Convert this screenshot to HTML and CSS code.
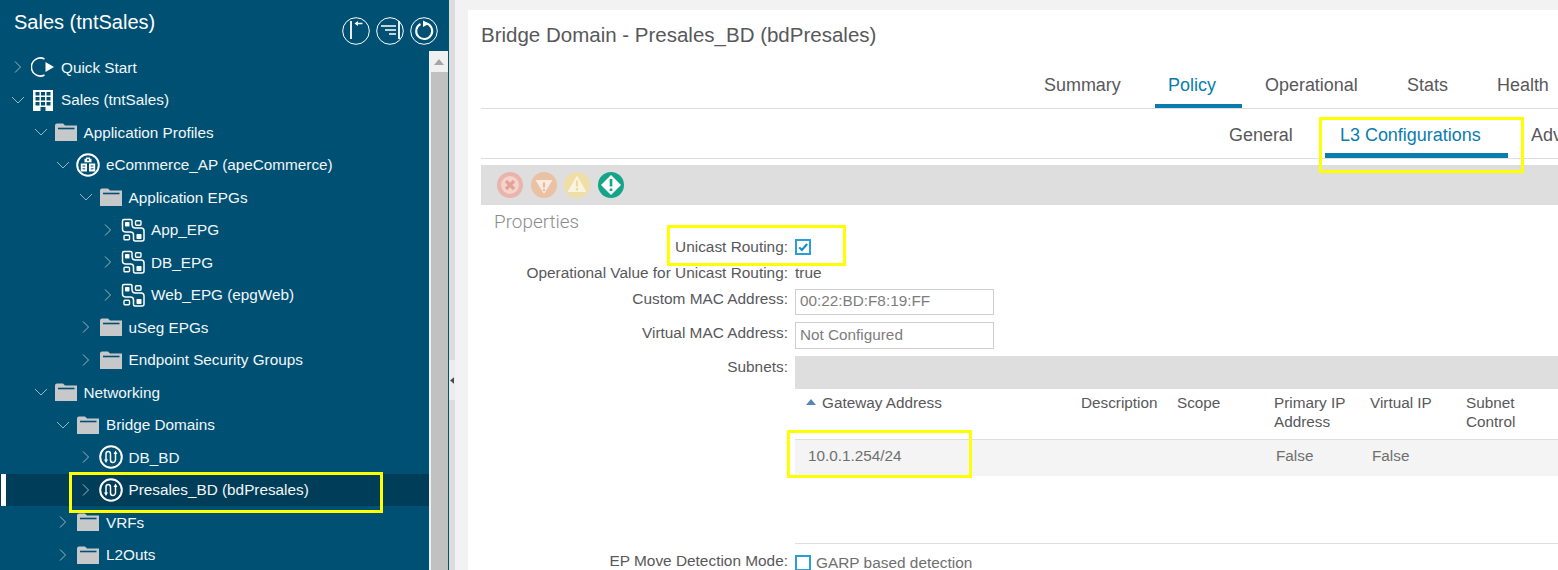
FILE: index.html
```html
<!DOCTYPE html>
<html lang="en">
<head>
<meta charset="utf-8">
<title>Bridge Domain - Presales_BD</title>
<link rel="stylesheet" href="styles.css">
</head>
<body>
<svg class="defs" width="0" height="0" aria-hidden="true">
  <defs>
    <symbol id="chev-r" viewBox="0 0 16 16"><path d="M5 2.500 10.500 8 5 13.500" fill="none" stroke="#9fb4be" stroke-width="1"/></symbol>
    <symbol id="chev-d" viewBox="0 0 16 16"><path d="M2 5 8 11 14 5" fill="none" stroke="#9fb4be" stroke-width="1"/></symbol>
    <symbol id="i-folder" viewBox="0 0 24 20"><path d="M1 3.500Q1 1.500 3 1.500H9L11 3.500H23V19H1Z" fill="#c6c8ca"/><path d="M4 6.500H20.500" stroke="#005073" stroke-width="1.600"/></symbol>
    <symbol id="i-play" viewBox="0 0 24 24"><path d="M13.500 4A9 9 0 1 0 13.500 20" fill="none" stroke="#fff" stroke-width="1.600"/><path d="M14.500 7 23 12 14.500 17Z" fill="#fff"/></symbol>
    <symbol id="i-tenant" viewBox="0 0 24 22"><path fill="#fff" fill-rule="evenodd" d="M2 1H22V22H14.500V18H9.500V22H2ZM4.500 3V6.500H8.500V3ZM10 3V6.500H14V3ZM15.500 3V6.500H19.500V3ZM4.500 8V11.500H8.500V8ZM10 8V11.500H14V8ZM15.500 8V11.500H19.500V8ZM4.500 13V16.500H8.500V13ZM10 13V16.500H14V13ZM15.500 13V16.500H19.500V13Z"/></symbol>
    <symbol id="i-ap" viewBox="0 0 24 24"><circle cx="12" cy="12" r="10.800" fill="none" stroke="#fff" stroke-width="2"/><path fill="#fff" d="M10 4.500h4v1.200h1.500v3.500H8.500V5.700H10ZM4.800 10.500h6.200v8H4.800ZM13 10.500h6.200v8H13Z"/><path stroke="#005073" stroke-width="1" d="M6.500 13h2.800M6.500 15.800h2.800M14.700 13h2.800M14.700 15.800h2.800"/><circle cx="12" cy="7" r="1" fill="#005073"/></symbol>
    <symbol id="i-epg" viewBox="0 0 24 24"><path fill="none" stroke="#fff" stroke-width="1.500" d="M1.500 3Q1.500 1.500 3 1.500H9.500Q11 1.500 11 3V6.500Q11 10 14.500 10H20Q23 10 23 13V21Q23 23 21 23H14Q12.500 23 12.500 21V17Q12.500 14 9.500 14H5Q1.500 14 1.500 11Z"/><rect x="4" y="4" width="4.500" height="4.500" rx="0.800" fill="#fff"/><rect x="15.500" y="16" width="5" height="5" rx="0.800" fill="#fff"/><rect x="14.500" y="2.800" width="5.500" height="4.400" rx="1" fill="none" stroke="#fff" stroke-width="1.400"/><rect x="3" y="17.300" width="5.500" height="4.400" rx="1" fill="none" stroke="#fff" stroke-width="1.400"/></symbol>
    <symbol id="i-bd" viewBox="0 0 24 24"><circle cx="12" cy="12" r="10.800" fill="none" stroke="#fff" stroke-width="2"/><path d="M7 16V9Q7 6.500 9.200 6.500T11.500 9V15Q11.500 17.500 13.800 17.500T16.500 15V8" fill="none" stroke="#fff" stroke-width="1.500"/><path fill="#fff" d="M5 14.500H9L7 18ZM14.500 9H18.500L16.500 5.500Z"/></symbol>
  </defs>
</svg>

<aside class="sidebar">
  <header class="side-head">
    <h1 class="side-title">Sales (tntSales)</h1>
    <div class="side-actions">
      <svg class="round-btn" viewBox="0 0 28 28"><circle cx="14" cy="14" r="13.300" fill="none" stroke="#fff" stroke-width="1"/><path d="M9 4V22" stroke="#fff" stroke-width="1.800"/><path d="M14 6.500H20.500" stroke="#fff" stroke-width="1.500"/><path d="M12.500 6.500 16 4V9Z" fill="#fff"/></svg>
      <svg class="round-btn" viewBox="0 0 28 28"><circle cx="14" cy="14" r="13.300" fill="none" stroke="#fff" stroke-width="1"/><path d="M23 4V22" stroke="#fff" stroke-width="1.800"/><path d="M5 9H20M9 13H20M13 17H20" stroke="#fff" stroke-width="1.500"/></svg>
      <svg class="round-btn" viewBox="0 0 28 28"><circle cx="14" cy="14" r="13.300" fill="none" stroke="#fff" stroke-width="1"/><path d="M10.500 7A8 8 0 1 0 16 6.300" fill="none" stroke="#fff" stroke-width="2"/><path d="M13 3.500 19 6.800 13 10Z" fill="#fff"/></svg>
    </div>
  </header>
  <div class="side-body">
    <nav class="tree">
      <div class="row l0"><svg class="chev"><use href="#chev-r"/></svg><svg class="ico"><use href="#i-play"/></svg><span>Quick Start</span></div>
      <div class="row l0"><svg class="chev"><use href="#chev-d"/></svg><svg class="ico"><use href="#i-tenant"/></svg><span>Sales (tntSales)</span></div>
      <div class="row l1"><svg class="chev"><use href="#chev-d"/></svg><svg class="ico"><use href="#i-folder"/></svg><span>Application Profiles</span></div>
      <div class="row l2"><svg class="chev"><use href="#chev-d"/></svg><svg class="ico"><use href="#i-ap"/></svg><span>eCommerce_AP (apeCommerce)</span></div>
      <div class="row l3"><svg class="chev"><use href="#chev-d"/></svg><svg class="ico"><use href="#i-folder"/></svg><span>Application EPGs</span></div>
      <div class="row l4"><svg class="chev"><use href="#chev-r"/></svg><svg class="ico"><use href="#i-epg"/></svg><span>App_EPG</span></div>
      <div class="row l4"><svg class="chev"><use href="#chev-r"/></svg><svg class="ico"><use href="#i-epg"/></svg><span>DB_EPG</span></div>
      <div class="row l4"><svg class="chev"><use href="#chev-r"/></svg><svg class="ico"><use href="#i-epg"/></svg><span>Web_EPG (epgWeb)</span></div>
      <div class="row l3"><svg class="chev"><use href="#chev-r"/></svg><svg class="ico"><use href="#i-folder"/></svg><span>uSeg EPGs</span></div>
      <div class="row l3"><svg class="chev"><use href="#chev-r"/></svg><svg class="ico"><use href="#i-folder"/></svg><span>Endpoint Security Groups</span></div>
      <div class="row l1"><svg class="chev"><use href="#chev-d"/></svg><svg class="ico"><use href="#i-folder"/></svg><span>Networking</span></div>
      <div class="row l2"><svg class="chev"><use href="#chev-d"/></svg><svg class="ico"><use href="#i-folder"/></svg><span>Bridge Domains</span></div>
      <div class="row l3"><svg class="chev"><use href="#chev-r"/></svg><svg class="ico"><use href="#i-bd"/></svg><span>DB_BD</span></div>
      <div class="row l3 selected"><svg class="chev"><use href="#chev-r"/></svg><svg class="ico"><use href="#i-bd"/></svg><span>Presales_BD (bdPresales)</span><i class="mark mark-tree"></i></div>
      <div class="row l2"><svg class="chev"><use href="#chev-r"/></svg><svg class="ico"><use href="#i-folder"/></svg><span>VRFs</span></div>
      <div class="row l2"><svg class="chev"><use href="#chev-r"/></svg><svg class="ico"><use href="#i-folder"/></svg><span>L2Outs</span></div>
    </nav>
    <div class="scrollbar">
      <div class="scroll-up"><svg class="scroll-arrow" viewBox="0 0 10 6"><path d="M0 6 5 0 10 6Z" fill="#a6a6a6"/></svg></div>
      <div class="scroll-thumb"></div>
    </div>
  </div>
</aside>

<div class="splitter"><div class="split-handle"><svg class="split-arrow" viewBox="0 0 5 8"><path d="M5 0V8L0 4Z" fill="#4a4a4a"/></svg></div></div>

<main class="main-wrap">
  <section class="panel">
    <h2 class="page-title">Bridge Domain - Presales_BD (bdPresales)</h2>
    <div class="tabs">
      <a class="tab t-summary">Summary</a>
      <a class="tab t-policy active">Policy</a>
      <a class="tab t-oper">Operational</a>
      <a class="tab t-stats">Stats</a>
      <a class="tab t-health">Health</a>
    </div>
    <div class="subtabs">
      <a class="subtab s-general">General</a>
      <a class="subtab s-l3 active">L3 Configurations<i class="mark mark-l3"></i></a>
      <a class="subtab s-adv">Adv</a>
    </div>
    <div class="fault-bar">
      <svg class="fault faded" viewBox="0 0 26 26"><circle cx="13" cy="13" r="13" fill="#e9b4ab"/><circle cx="13" cy="13" r="9" fill="#f3d3cc"/><path d="M9 9 17 17M17 9 9 17" stroke="#e5a195" stroke-width="3.200"/></svg>
      <svg class="fault faded" viewBox="0 0 26 26"><circle cx="13" cy="13" r="13" fill="#ebc1a6"/><path d="M4.500 8H21.500L13 22Z" fill="#f8ebe1"/><path d="M13 10.500V15.500M13 17V19" stroke="#ebb997" stroke-width="2.200"/></svg>
      <svg class="fault faded" viewBox="0 0 26 26"><circle cx="13" cy="13" r="13" fill="#efdea6"/><path d="M13 3.500 22.500 20H3.500Z" fill="#f9f4e2"/><path d="M13 8.500V14.500M13 16V18.500" stroke="#eeda9a" stroke-width="2.200"/></svg>
      <svg class="fault" viewBox="0 0 26 26"><circle cx="13" cy="13" r="13" fill="#14a487"/><path d="M13 3 23 13 13 23 3 13Z" fill="#fff"/><path d="M13 7V14.500M13 16.500V19" stroke="#14a487" stroke-width="2.600"/></svg>
    </div>
    <h3 class="section-title">Properties</h3>
    <div class="form">
      <div class="f-row f-unicast">
        <label class="f-label">Unicast Routing:</label>
        <span class="check on"><svg viewBox="0 0 16 16"><path d="M3 8.500 6.500 12 13.500 4" fill="none" stroke="#0d8fc9" stroke-width="2.800"/></svg></span>
        <i class="mark mark-unicast"></i>
      </div>
      <div class="f-row f-oper">
        <label class="f-label">Operational Value for Unicast Routing:</label>
        <span class="f-value">true</span>
      </div>
      <div class="f-row f-input">
        <label class="f-label">Custom MAC Address:</label>
        <div class="input">00:22:BD:F8:19:FF</div>
      </div>
      <div class="f-row f-input f-input2">
        <label class="f-label">Virtual MAC Address:</label>
        <div class="input tall">Not Configured</div>
      </div>
      <div class="f-row f-subnets">
        <label class="f-label">Subnets:</label>
        <div class="subnets">
          <div class="tbl-bar"></div>
          <div class="tbl-row tbl-head">
            <div class="c-gw"><svg class="sort" viewBox="0 0 10 6"><path d="M0 6 5 0 10 6Z" fill="#5b87b8"/></svg>Gateway Address</div>
            <div class="c-desc">Description</div>
            <div class="c-scope">Scope</div>
            <div class="c-prim">Primary IP<br>Address</div>
            <div class="c-virt">Virtual IP</div>
            <div class="c-ctrl">Subnet<br>Control</div>
          </div>
          <div class="tbl-row tbl-data">
            <div class="c-gw">10.0.1.254/24<i class="mark mark-gw"></i></div>
            <div class="c-desc"></div>
            <div class="c-scope"></div>
            <div class="c-prim">False</div>
            <div class="c-virt">False</div>
            <div class="c-ctrl"></div>
          </div>
          <div class="tbl-end"></div>
        </div>
      </div>
      <div class="f-row f-ep">
        <label class="f-label">EP Move Detection Mode:</label>
        <span class="check"></span>
        <span class="check-text">GARP based detection</span>
      </div>
    </div>
  </section>
</main>
</body>
</html>
```

FILE: styles.css
```css
* { box-sizing: border-box; }
html, body { margin: 0; height: 570px; overflow: hidden; }
body {
  width: 1558px;
  display: flex;
  font-family: "Liberation Sans", Arial, sans-serif;
  background: #f2f2f2;
  color: #58585b;
}
.defs { position: absolute; }

/* sidebar */
.sidebar { width: 449px; flex: none; background: #005073; display: flex; flex-direction: column; border-right: 1px solid #005073; }
.side-head { height: 51px; flex: none; display: flex; justify-content: space-between; padding: 0 10px 0 14px; }
.side-title { margin: 10px 0 0; font-size: 20px; line-height: 24px; font-weight: 400; color: #fff; }
.side-actions { display: flex; gap: 6px; padding-top: 17px; }
.round-btn { width: 28px; height: 28px; }
.side-body { flex: 1; display: flex; min-height: 0; }
.tree { width: 429px; flex: none; }
.row {
  position: relative;
  height: 32.5px;
  display: flex;
  align-items: center;
  font-size: 15.3px;
  color: #f2f7fa;
}
.row span { margin-top: 1px; }
.chev { width: 16px; height: 16px; margin-right: 5px; flex: none; }
.ico { width: 24px; height: 24px; margin-right: 6px; flex: none; }
.l0 { padding-left: 10px; }
.l1 { padding-left: 32.5px; }
.l2 { padding-left: 55px; }
.l3 { padding-left: 77.5px; }
.l4 { padding-left: 100px; }
.selected { background: #003d58; }
.selected::before { content: ""; position: absolute; left: 1px; top: 0; bottom: 0; width: 5px; background: #fff; }

.scrollbar { width: 19px; flex: none; background: #f0f0f0; display: flex; flex-direction: column; }
.scroll-up { height: 21px; flex: none; display: flex; justify-content: center; padding-top: 8px; }
.scroll-arrow { width: 10px; height: 6px; }
.scroll-thumb { flex: 1; margin-left: 2px; background: #c1c1c1; }

.splitter { width: 6px; flex: none; background: #dcdcdc; position: relative; }
.split-handle { position: absolute; left: 0; top: 360px; width: 6px; height: 40px; background: #ececec; display: flex; align-items: center; padding-left: 1px; }
.split-arrow { width: 4px; height: 7px; }

/* main */
.main-wrap { flex: 1; min-width: 0; padding: 10px 0 0 13px; overflow: hidden; }
.panel { width: 1090px; height: 560px; background: #fff; padding: 0 0 0 13px; overflow: hidden; }
.page-title { margin: 0; height: 50px; padding-top: 12px; font-size: 20.5px; line-height: 26px; font-weight: 400; color: #58585b; }

.tabs { height: 49px; display: flex; align-items: stretch; border-bottom: 1px solid #dedede; white-space: nowrap; }
.tab { flex: none; font-size: 17.95px; line-height: 20px; padding-top: 15px; color: #58585b; }
.t-summary { margin-left: 563px; width: 111px; }
.t-policy { width: 87px; padding-left: 13px; color: #0a7cae; border-bottom: 4px solid #0a7cae; }
.t-oper { margin-left: 23px; width: 142px; }
.t-stats { width: 90px; }
.t-health { width: 100px; }

.subtabs { height: 50px; display: flex; border-bottom: 1px solid #dedede; white-space: nowrap; }
.subtab { flex: none; position: relative; font-size: 17.95px; line-height: 20px; padding-top: 16px; color: #58585b; }
.s-general { margin-left: 748px; width: 96px; }
.s-l3 { width: 183px; padding-left: 15px; color: #0a7cae; border-bottom: 5px solid #0a7cae; }
.s-adv { margin-left: 23px; width: 27px; overflow: hidden; }

.fault-bar { margin-top: 6px; height: 40px; background: #dedede; display: flex; align-items: center; gap: 7.500px; padding-left: 16px; }
.fault { width: 26px; height: 26px; flex: none; }

.section-title { margin: 0; height: 29px; padding: 6px 0 0 13px; font-family: Roboto, sans-serif; font-size: 18.9px; line-height: 22px; font-weight: 300; color: #8c8c8c; }

.form { font-size: 15.4px; }
.f-row { position: relative; display: flex; align-items: flex-start; }
.f-label { width: 307px; flex: none; margin-right: 7px; text-align: right; color: #58585b; }
.f-unicast { height: 26px; align-items: center; }
.f-oper { height: 29px; padding-top: 4px; line-height: 18px; }
.f-value { color: #58585b; }
.f-input { height: 33px; line-height: 18px; padding-top: 1px; }
.f-input .f-label { line-height: 18px; }
.f-input2 { height: 34px; }
.f-input2 .f-label { line-height: 20px; }
.input { width: 199px; height: 26px; padding: 0 4px; margin-top: -1px; border: 1px solid #cfcfcf; line-height: 22px; color: #7d7d7d; font-size: 15.3px; }
.input.tall { height: 27px; line-height: 23px; }
.check { width: 16px; height: 16px; flex: none; border: 2px solid #2a9fd6; background: #fff; display: block; }
.check svg { display: block; width: 12px; height: 12px; }
.f-subnets { height: 199px; }
.f-subnets .f-label { line-height: 22px; }
.subnets { width: 800px; flex: none; }
.tbl-bar { height: 33px; background: #dedede; }
.tbl-row { display: grid; grid-template-columns: 286px 96px 97px 96px 96px 100px; font-size: 15.3px; line-height: 19px; color: #58585b; }
.tbl-head { height: 51px; padding-top: 4px; border-bottom: 1px solid #dedede; }
.tbl-head .c-gw { padding-left: 11px; display: flex; align-items: flex-start; }
.sort { width: 10px; height: 6px; margin: 6px 6px 0 0; flex: none; }
.tbl-data { height: 36px; padding-bottom: 6px; background: #f4f4f4; align-items: center; color: #6f6f6f; }
.tbl-data .c-gw { position: relative; padding-left: 13px; height: 19px; }
.tbl-data .c-prim, .tbl-data .c-virt { padding-left: 2px; }
.tbl-end { height: 68px; border-bottom: 1px solid #dedede; }
.f-ep { align-items: flex-start; height: 15px; }
.f-ep .f-label { line-height: 12px; }
.check-text { margin-left: 5px; color: #6f6f6f; line-height: 15px; }

/* yellow annotation boxes */
.mark { position: absolute; border: 3px solid #ffff00; pointer-events: none; display: block; }
.mark-tree { left: 69px; top: -2px; width: 314px; height: 41px; }
.mark-l3 { left: -6px; top: 8px; width: 205px; height: 56px; }
.mark-unicast { left: 186px; top: -9px; width: 179px; height: 41px; }
.mark-gw { left: -8px; top: -16px; width: 185px; height: 48px; }
```
